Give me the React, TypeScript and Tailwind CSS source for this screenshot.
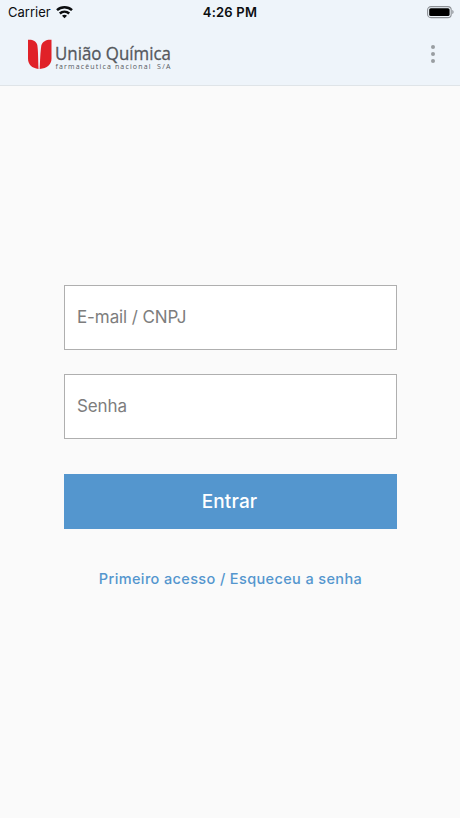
export default function App() {
  return (
    <div className="flex h-screen w-full flex-col overflow-hidden bg-[#fafafa] font-['Inter','Liberation_Sans',sans-serif]">
      <header className="h-[86px] shrink-0 border-b border-[#dfe4e8] bg-[#eef4fa]">
        <StatusBar />
        <div className="flex h-[60px] items-center justify-between pr-[23px] pl-7">
          <Logo />
          <button type="button" aria-label="Menu" className="flex flex-col gap-[2.5px] pr-0.5">
            <span className="size-[4.5px] rounded-full bg-[#999da1]" />
            <span className="size-[4.5px] rounded-full bg-[#999da1]" />
            <span className="size-[4.5px] rounded-full bg-[#999da1]" />
          </button>
        </div>
      </header>

      <main className="flex flex-col items-center pt-[198.5px] pr-[63.5px] pl-[63.5px]">
        <form className="flex w-full flex-col">
          <Field type="text" placeholder="E-mail / CNPJ" />
          <Field type="password" placeholder="Senha" />
          <button
            type="button"
            className="mt-[11px] h-[55.5px] bg-[#5496ce] pt-0.5 pr-px text-[19px] font-medium tracking-[0.15px] text-white"
          >
            Entrar
          </button>
        </form>
        <a
          href="#"
          className="mt-10 pl-px text-[14.5px] leading-5 font-medium tracking-[0.37px] whitespace-nowrap text-[#5496ce]"
        >
          Primeiro acesso / Esqueceu a senha
        </a>
      </main>
    </div>
  );
}

const Field = ({ type, placeholder }: { type: string; placeholder: string }) => (
  <input
    type={type}
    placeholder={placeholder}
    className="mb-[23.5px] h-[65.5px] w-full border border-[#afafaf] bg-white px-[12.5px] text-[17px] tracking-[-0.1px] text-[#333] outline-none placeholder:text-[#7d7d7d]"
  />
);

const StatusBar = () => (
  <div className="grid h-6 grid-cols-3 items-center pr-1.5 pl-2 text-[#0b0d0f]">
    <div className="flex items-center gap-[5px] text-[13px]">
      <span className="pt-px">Carrier</span>
      <Wifi />
    </div>
    <span className="pt-px pr-0.5 text-center text-[13px] font-semibold tracking-[0.2px]">4:26 PM</span>
    <div className="flex justify-end">
      <Battery />
    </div>
  </div>
);

// svg icons
const Wifi = () => (
  <svg width={17} height={13} viewBox="0 0 17 13" fill="none" stroke="currentColor" strokeWidth={2.5}>
    <path d="M1 4.2C5.2.3 11.8.3 16 4.2" />
    <path d="M3.8 7.5c2.7-2.4 6.7-2.4 9.4 0" />
    <path d="M8.5 12.3 6 9.8c1.4-1.3 3.6-1.3 5 0Z" fill="currentColor" stroke="none" />
  </svg>
);

const Battery = () => (
  <svg width={27} height={13} viewBox="0 0 27 13">
    <rect x={0.6} y={0.6} width={23.6} height={11} rx={3.4} fill="none" stroke="#8d9196" strokeWidth={1.1} />
    <rect x={2.2} y={2.2} width={20.4} height={7.8} rx={1.6} fill="#000" />
    <path d="M25.3 4.1c1.7.5 1.7 3.5 0 4Z" fill="#8d9196" />
  </svg>
);

const Logo = () => (
  <svg width={150} height={32} viewBox="0 0 150 32" className="overflow-visible" aria-label="União Química">
    <path d="M0 1.8c4-.5 8.3 1 9.3 5.3.9 5.5.8 13 1.200 23.800C3.900 30.300 0 26.500 0 20.500Z" fill="#e02128" />
    <path
      d="M23.500 1.800c-4-.5-9.200 1-10.200 6-.8 5.500-1.200 12.500-1.600 23.100 7.400-.4 11.800-4.400 11.800-10.400Z"
      fill="#e02128"
    />
    <text
      x={27}
      y={22}
      textLength={116}
      lengthAdjust="spacingAndGlyphs"
      fill="#55585d"
      stroke="#55585d"
      strokeWidth={0.3}
      className="font-['Open_Sans',sans-serif] text-[17.5px]"
    >
      União Química
    </text>
    <text x={27.5} y={30.7} textLength={95} fill="#55585d" className="font-['Open_Sans',sans-serif] text-[7px]">
      farmacêutica nacional
    </text>
    <text x={129} y={30.7} textLength={13.5} fill="#55585d" className="font-['Open_Sans',sans-serif] text-[7px]">
      S/A
    </text>
  </svg>
);
